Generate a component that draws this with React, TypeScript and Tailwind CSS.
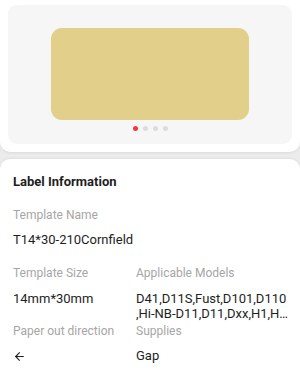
import React from "react";
import { ArrowLeft } from "lucide-react";

export default function App() {
  return (
    <div
      className="w-[300px] h-[376px] overflow-hidden bg-[#ececec] flex flex-col"
      style={{ fontFamily: "Roboto, 'Noto Sans', sans-serif" }}
    >
      <div className="w-[300px] h-[152px] bg-white rounded-b-[10px] shadow-[0_1px_3px_rgba(0,0,0,0.08)] pt-[5px] px-[8px] shrink-0">
        <div className="h-[139px] bg-[#f6f6f6] rounded-[9px] flex flex-col items-center pt-[23px]">
          <div className="w-[198px] h-[92px] bg-[#e2d08a] rounded-[11px]" />
          <div className="flex gap-[5px] mt-[6px]">
            <div className="w-[5px] h-[5px] rounded-full bg-[#f03a3a]" />
            <div className="w-[5px] h-[5px] rounded-full bg-[#dcdcdc]" />
            <div className="w-[5px] h-[5px] rounded-full bg-[#dcdcdc]" />
            <div className="w-[5px] h-[5px] rounded-full bg-[#dcdcdc]" />
          </div>
        </div>
      </div>
      <div className="mt-[7px] flex-1 bg-white rounded-t-[10px] shadow-[0_-1px_3px_rgba(0,0,0,0.06)] pl-[13px] pt-[14px]">
        <div className="text-[13px] leading-[18px] font-bold text-[#1e1e1e]">Label Information</div>
        <div className="mt-[16px] text-[12px] leading-[16px] text-[#a6a6a6]">Template Name</div>
        <div className="mt-[8px] text-[13px] leading-[18px] text-[#1e1e1e]">T14*30-210Cornfield</div>
        <div className="mt-[16px] flex">
          <div className="w-[123px]">
            <div className="text-[12px] leading-[16px] text-[#a6a6a6]">Template Size</div>
            <div className="mt-[9.5px] text-[13px] leading-[15px] text-[#1e1e1e]">14mm*30mm</div>
          </div>
          <div className="flex-1 min-w-0">
            <div className="text-[12px] leading-[16px] text-[#a6a6a6]">Applicable Models</div>
            <div className="mt-[9.5px] text-[13px] leading-[15px] text-[#1e1e1e] whitespace-nowrap">D41,D11S,Fust,D101,D110</div>
            <div className="text-[13px] leading-[15px] text-[#1e1e1e] whitespace-nowrap">,Hi-NB-D11,D11,Dxx,H1,H…</div>
          </div>
        </div>
        <div className="mt-[2.5px] flex">
          <div className="w-[123px]">
            <div className="text-[12px] leading-[16px] text-[#a6a6a6]">Paper out direction</div>
            <div className="mt-[8px] h-[18px] flex items-center text-[#1e1e1e]">
              <ArrowLeft size={13} strokeWidth={2} />
            </div>
          </div>
          <div className="flex-1">
            <div className="text-[12px] leading-[16px] text-[#a6a6a6]">Supplies</div>
            <div className="mt-[8px] text-[13px] leading-[18px] text-[#1e1e1e]">Gap</div>
          </div>
        </div>
      </div>
    </div>
  );
}
